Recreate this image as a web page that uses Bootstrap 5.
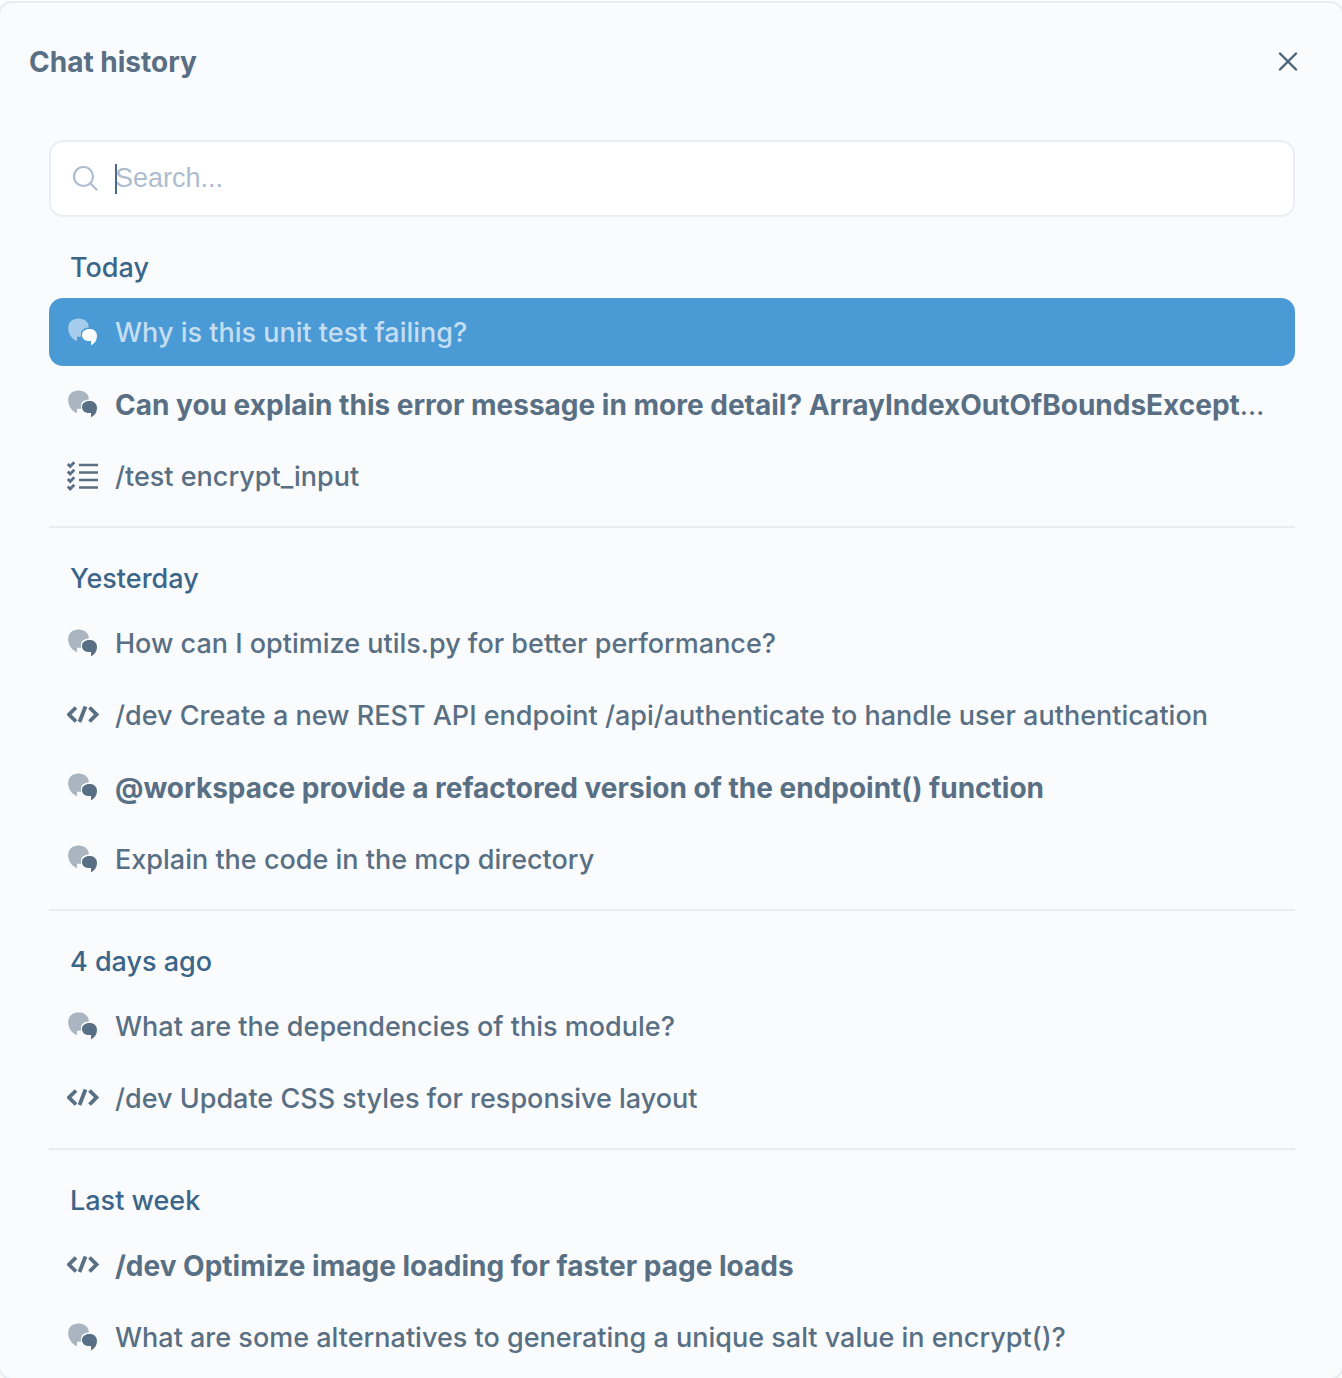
<!DOCTYPE html>
<html lang="en">
<head>
<meta charset="utf-8">
<meta name="viewport" content="width=device-width, initial-scale=1">
<title>Chat history</title>
<link href="https://cdn.jsdelivr.net/npm/bootstrap@5.3.0/dist/css/bootstrap.min.css" rel="stylesheet">
<style>
  :root { --ink: #586f84; --heading: #3b6689; --line: #e7ecf1; --panel: #fafbfd; --accent: #4a9ad6; }
  body { font-family: Inter, sans-serif; font-size: 27px; line-height: 40px; font-weight: 450; color: var(--ink); background: #fdfdfe; overflow-x: hidden; }
  .history-panel { margin: 1px -2px 0; background: var(--panel); border: 2px solid var(--line); border-radius: 14px; padding-bottom: 7px; }
  .panel-head { padding: 39px 36px 0 29px; }
  .panel-head h1 { font-size: 28px; line-height: 40px; font-weight: 700; }
  .close-btn { width: 36px; height: 36px; color: #4b6478; }
  .panel-content { padding: 58px 47px 0 49px; }
  .search-box { height: 77px; background: #fff; border: 2px solid #ebeef3; border-radius: 14px; padding: 0 20px; gap: 14px; color: #adbdd0; }
  .search-box .field { position: relative; margin-bottom: 2px; }
  .search-box .field::before { content: ""; position: absolute; left: 0; top: 4px; width: 2px; height: 30px; background: #4b6a85; }
  .search-box input { font-family: "Liberation Sans", Arial, sans-serif; font-size: 27px; line-height: 36px; color: var(--ink); caret-color: transparent; }
  .search-box input::placeholder { color: #adbdd0; opacity: 1; }
  .search-box input:focus { box-shadow: none; background: transparent; }
  .day-title { font-size: 27px; line-height: 40px; font-weight: 450; color: var(--heading); padding: 31px 21px 10px; }
  .chat-list { gap: 4px; }
  .chat-row { height: 68px; padding: 0 18px; gap: 16px; border-radius: 14px; color: var(--ink); text-decoration: none; }
  .chat-row span { padding-top: 2px; }
  .chat-row strong { font-size: 28px; }
  .chat-row:hover { background: #eef3f8; }
  .chat-row.active, .chat-row.active:hover { background: var(--accent); color: #fff; }
  .chat-row.active span { color: #c5def2; }
  .day-group + .day-group { border-top: 2px solid var(--line); margin-top: 16px; }
  .chat-row svg { width: 32px; height: 32px; }
</style>
<script src="https://cdn.jsdelivr.net/npm/bootstrap@5.3.0/dist/js/bootstrap.bundle.min.js"></script>
</head>
<body>
<svg class="d-none" aria-hidden="true">
  <symbol id="chat" viewBox="0 0 32 32">
    <path d="M11.500 2.500C5.500 2.500 1.200 6.200 1.200 12C1.200 18 4.700 23 10 25.200V20.700H14V19.500C13.500 14.600 16.400 11.800 21.800 11.600C21.800 6 17.800 2.500 11.500 2.500Z" fill="currentColor" opacity=".5"/>
    <path d="M22.500 13C18 13 15 15.400 15 19C15 22.900 18 25 22 25H24V29.500C28 27.200 30 24 30 20C30 15.700 27.200 13 22.500 13Z" fill="currentColor"/>
  </symbol>
  <symbol id="checks" viewBox="0 0 32 32">
    <g fill="none" stroke="currentColor" stroke-width="2.400">
      <path d="M12 5H31M12 12.500H31M12 20H31M12 27.500H31"/>
      <path stroke-width="2.800" d="M.8 4L3.200 6.400L7.300 2.300M.8 11.500L3.200 13.900L7.300 9.800M.8 19L3.200 21.400L7.300 17.300M.8 26.500L3.200 28.900L7.300 24.800"/>
    </g>
  </symbol>
  <symbol id="code" viewBox="0 0 32 32">
    <path d="M9 8.500L2 15.500L9 22.500M22.500 8.500L29.500 15.500L22.500 22.500M18.500 7.500L12.500 23" fill="none" stroke="currentColor" stroke-width="3.800"/>
  </symbol>
</svg>

<main class="history-panel">
  <header class="panel-head d-flex align-items-center justify-content-between">
    <h1 class="m-0">Chat history</h1>
    <button type="button" class="close-btn btn p-0 border-0 d-flex align-items-center justify-content-center" aria-label="Close">
      <svg width="20" height="20" viewBox="0 0 20 20" fill="none" stroke="currentColor" stroke-width="2.400" stroke-linecap="round"><path d="M2 1.500L18 17.500M18 1.500L2 17.500"/></svg>
    </button>
  </header>
  <div class="panel-content">
    <label class="search-box d-flex align-items-center">
      <svg width="30" height="30" viewBox="0 0 30 30" fill="none" stroke="currentColor" stroke-width="2.200" stroke-linecap="round"><circle cx="12.500" cy="12.500" r="9.500"/><path d="M19.500 19.500L25.500 25.500"/></svg>
      <span class="field flex-grow-1 d-flex"><input type="text" class="form-control border-0 bg-transparent p-0" placeholder="Search..." aria-label="Search chats"></span>
    </label>

    <section class="day-group">
      <h2 class="day-title m-0">Today</h2>
      <div class="chat-list d-flex flex-column">
        <a href="#" class="chat-row active d-flex align-items-center" aria-current="true"><svg class="flex-shrink-0"><use href="#chat"/></svg><span class="text-truncate">Why is this unit test failing?</span></a>
        <a href="#" class="chat-row d-flex align-items-center"><svg class="flex-shrink-0"><use href="#chat"/></svg><span class="text-truncate"><strong>Can you explain this error message in more detail? ArrayIndexOutOfBoundsExcept</strong>…</span></a>
        <a href="#" class="chat-row d-flex align-items-center"><svg class="flex-shrink-0"><use href="#checks"/></svg><span class="text-truncate">/test encrypt_input</span></a>
      </div>
    </section>

    <section class="day-group">
      <h2 class="day-title m-0">Yesterday</h2>
      <div class="chat-list d-flex flex-column">
        <a href="#" class="chat-row d-flex align-items-center"><svg class="flex-shrink-0"><use href="#chat"/></svg><span class="text-truncate">How can I optimize utils.py for better performance?</span></a>
        <a href="#" class="chat-row d-flex align-items-center"><svg class="flex-shrink-0"><use href="#code"/></svg><span class="text-truncate">/dev Create a new REST API endpoint /api/authenticate to handle user authentication</span></a>
        <a href="#" class="chat-row d-flex align-items-center"><svg class="flex-shrink-0"><use href="#chat"/></svg><span class="text-truncate"><strong>@workspace provide a refactored version of the endpoint() function</strong></span></a>
        <a href="#" class="chat-row d-flex align-items-center"><svg class="flex-shrink-0"><use href="#chat"/></svg><span class="text-truncate">Explain the code in the mcp directory</span></a>
      </div>
    </section>

    <section class="day-group">
      <h2 class="day-title m-0">4 days ago</h2>
      <div class="chat-list d-flex flex-column">
        <a href="#" class="chat-row d-flex align-items-center"><svg class="flex-shrink-0"><use href="#chat"/></svg><span class="text-truncate">What are the dependencies of this module?</span></a>
        <a href="#" class="chat-row d-flex align-items-center"><svg class="flex-shrink-0"><use href="#code"/></svg><span class="text-truncate">/dev Update CSS styles for responsive layout</span></a>
      </div>
    </section>

    <section class="day-group">
      <h2 class="day-title m-0">Last week</h2>
      <div class="chat-list d-flex flex-column">
        <a href="#" class="chat-row d-flex align-items-center"><svg class="flex-shrink-0"><use href="#code"/></svg><span class="text-truncate"><strong>/dev Optimize image loading for faster page loads</strong></span></a>
        <a href="#" class="chat-row d-flex align-items-center"><svg class="flex-shrink-0"><use href="#chat"/></svg><span class="text-truncate">What are some alternatives to generating a unique salt value in encrypt()?</span></a>
      </div>
    </section>
  </div>
</main>
</body>
</html>
